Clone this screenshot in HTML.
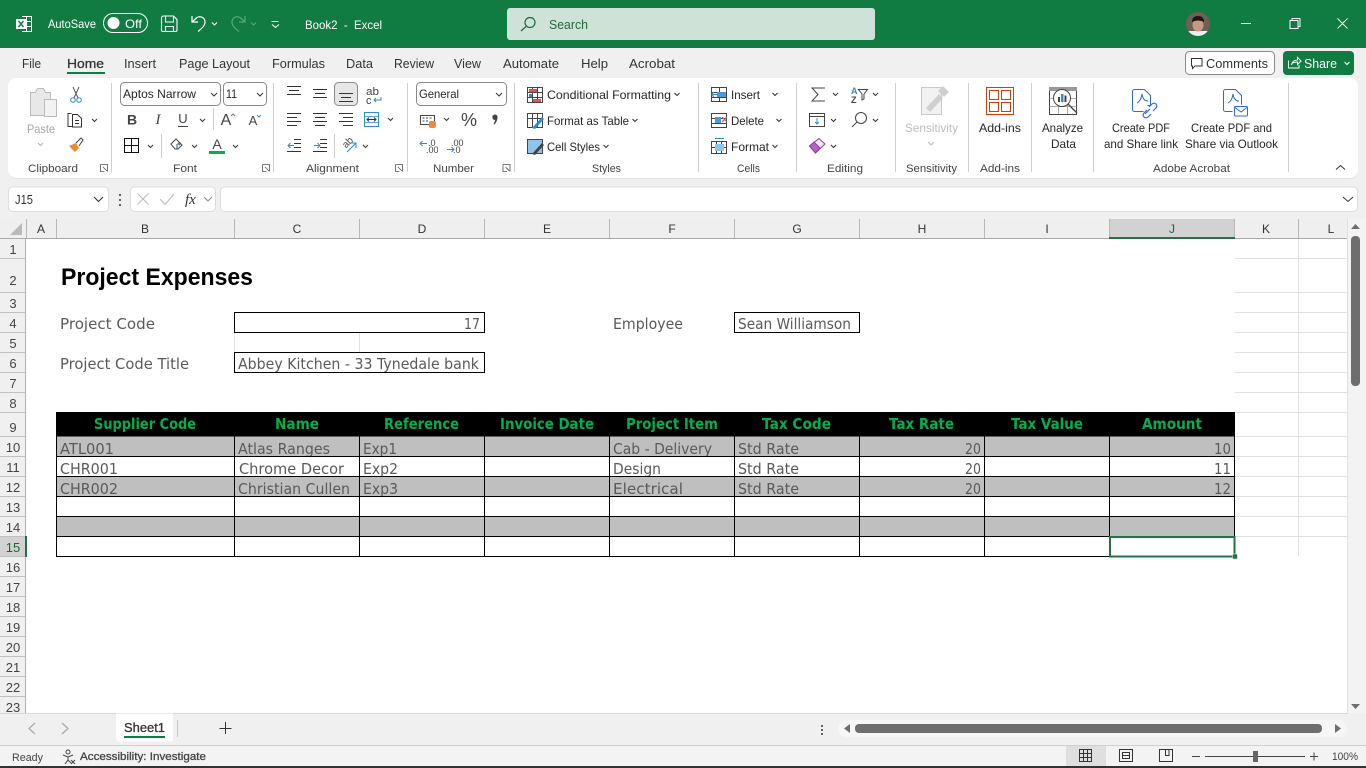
<!DOCTYPE html>
<html><head><meta charset="utf-8"><title>Book2 - Excel</title>
<style>
html,body{margin:0;padding:0;width:1366px;height:768px;overflow:hidden;background:#fff}
svg{display:block}
text{font-family:"Liberation Sans",sans-serif;font-size:12px;fill:#262626;white-space:pre}
.t{font-size:13px;fill:#333}
.g{font-size:11px;fill:#444}
.h{font-size:12px;fill:#333;text-anchor:middle}
.rn{font-size:13px;fill:#444;text-anchor:middle}
.s{font-family:"DejaVu Sans",sans-serif;font-size:15px;fill:#5a5a5a}
.b{font-family:"DejaVu Sans",sans-serif;font-weight:bold;font-size:15px;fill:#00b050}
.w{fill:#fff}
.sb{stroke:#333;stroke-width:.3}
</style></head><body>
<svg width="1366" height="768" viewBox="0 0 1366 768" xmlns="http://www.w3.org/2000/svg">
<rect width="1366" height="768" fill="#fff"/>
<!-- title bar -->
<rect width="1366" height="48" fill="#107c41"/>
<rect y="48" width="1366" height="172" fill="#f0f0f0"/>
<path d="M22 16.500h9.500v15H22M22 21.500h9.500M22 26.500h9.500M26.500 16.500v15" fill="none" stroke="#fff"/>
<rect x="16" y="19" width="10" height="10" fill="#fff"/>
<path d="M18.500 21l5 6M23.500 21l-5 6" stroke="#107c41" stroke-width="1.500"/>
<text x="48" y="28" class="w" textLength="48" lengthAdjust="spacingAndGlyphs">AutoSave</text>
<rect x="103.500" y="13.500" width="44" height="19" rx="9.500" fill="none" stroke="#fff"/>
<circle cx="113.500" cy="23" r="6" fill="#fff"/>
<text x="125" y="28" class="w" textLength="17" lengthAdjust="spacingAndGlyphs">Off</text>
<path d="M161.500 18a2 2 0 0 1 2-2h10l3.500 3.500V30a1.500 1.500 0 0 1-1.500 1.500h-12.500a1.500 1.500 0 0 1-1.500-1.500zM165.500 16v6h8v-6M165.500 31.500v-5h8v5" fill="none" stroke="#fff" stroke-width="1.100"/>
<path d="M192 16v6h6M192 22l5-4.500c4-2 8 .5 8 4.500 0 4-4 7-7 9.500" fill="none" stroke="#fff" stroke-width="1.200"/>
<path d="M245 16v6h-6M245 22l-5-4.500c-4-2-8 .5-8 4.500 0 4 4 7 7 9.500" fill="none" stroke="#5da57f" stroke-width="1.200"/>
<path d="M212 22.500l2.500 2.500 2.500-2.500M271.500 21.500h7M272 24.500l3.500 3 3.500-3" fill="none" stroke="#fff"/>
<path d="M251 22.500l2.500 2.500 2.500-2.500" fill="none" stroke="#5da57f"/>
<text x="305" y="29" class="w" textLength="77" lengthAdjust="spacingAndGlyphs">Book2  -  Excel</text>
<rect x="507" y="8" width="368" height="32" rx="3" fill="#cfe2d8"/>
<circle cx="530" cy="22.500" r="5" fill="none" stroke="#1c6b40" stroke-width="1.200"/><path d="M526 26.500l-5 4.500" stroke="#1c6b40" stroke-width="1.200"/>
<text x="549" y="29" style="fill:#24693f;font-size:13px" textLength="39" lengthAdjust="spacingAndGlyphs">Search</text>
<clipPath id="av"><circle cx="1198" cy="24" r="12"/></clipPath>
<g clip-path="url(#av)"><rect x="1186" y="12" width="24" height="24" fill="#6f5f56"/><rect x="1186" y="31" width="24" height="5" fill="#eee"/><ellipse cx="1198" cy="25" rx="5.500" ry="6.500" fill="#c79a80"/><path d="M1192 22q0-6 6-6t6 6q-6-3-12 0z" fill="#1e1612"/></g>
<path d="M1241 23.500h10M1290 20.500h8v8h-8zM1292 20.500v-2h8v8h-2M1337.500 18.500l10 10M1347.500 18.500l-10 10" fill="none" stroke="#fff"/>
<!-- tabs -->
<text x="22" y="68" class="t" textLength="19" lengthAdjust="spacingAndGlyphs">File</text>
<text x="67" y="68" class="t sb" textLength="37" lengthAdjust="spacingAndGlyphs">Home</text>
<rect x="67" y="72" width="38" height="2" fill="#107c41"/>
<text x="124" y="68" class="t" textLength="32" lengthAdjust="spacingAndGlyphs">Insert</text>
<text x="179" y="68" class="t" textLength="71" lengthAdjust="spacingAndGlyphs">Page Layout</text>
<text x="272" y="68" class="t" textLength="53" lengthAdjust="spacingAndGlyphs">Formulas</text>
<text x="346" y="68" class="t" textLength="27" lengthAdjust="spacingAndGlyphs">Data</text>
<text x="394" y="68" class="t" textLength="40" lengthAdjust="spacingAndGlyphs">Review</text>
<text x="454" y="68" class="t" textLength="27" lengthAdjust="spacingAndGlyphs">View</text>
<text x="503" y="68" class="t" textLength="56" lengthAdjust="spacingAndGlyphs">Automate</text>
<text x="581" y="68" class="t" textLength="27" lengthAdjust="spacingAndGlyphs">Help</text>
<text x="629" y="68" class="t" textLength="46" lengthAdjust="spacingAndGlyphs">Acrobat</text>
<rect x="1185.500" y="51.500" width="89" height="23" rx="4" fill="#fff" stroke="#8a8a8a"/>
<path d="M1191.500 58.500h10.500v7.500h-7l-2.500 2.500v-2.500h-1z" fill="none" stroke="#333"/>
<text x="1206" y="68" class="t" textLength="62" lengthAdjust="spacingAndGlyphs">Comments</text>
<rect x="1283" y="51" width="71" height="24" rx="4" fill="#107c41"/>
<path d="M1288.500 60.500v7.500h10.500v-3M1291.500 65q1-5 6-5v-2.500l3.500 3.500-3.500 3.500v-2.500q-3 0-6 1.500M1344.500 62l2.500 2.500 2.500-2.500" fill="none" stroke="#fff"/>
<text x="1304" y="68" class="t" style="fill:#fff" textLength="33" lengthAdjust="spacingAndGlyphs">Share</text>
<!-- ribbon -->
<rect x="8" y="79.500" width="1350" height="99" rx="8" fill="#d4d4d4"/>
<rect x="8" y="78" width="1350" height="100" rx="8" fill="#fff"/>
<path d="M111.500 83v89M273.500 83v89M407.500 83v89M514.500 83v89M698.500 83v89M796.500 83v89M895.500 83v89M968.500 83v89M1031.500 83v89M1093.500 83v89M1288.500 83v89" stroke="#cfcfcf"/>
<text x="28" y="172" class="g" textLength="50" lengthAdjust="spacingAndGlyphs">Clipboard</text>
<text x="173" y="172" class="g" textLength="24" lengthAdjust="spacingAndGlyphs">Font</text>
<text x="306" y="172" class="g" textLength="53" lengthAdjust="spacingAndGlyphs">Alignment</text>
<text x="433" y="172" class="g" textLength="41" lengthAdjust="spacingAndGlyphs">Number</text>
<text x="592" y="172" class="g" textLength="29" lengthAdjust="spacingAndGlyphs">Styles</text>
<text x="737" y="172" class="g" textLength="23" lengthAdjust="spacingAndGlyphs">Cells</text>
<text x="827" y="172" class="g" textLength="36" lengthAdjust="spacingAndGlyphs">Editing</text>
<text x="906" y="172" class="g" textLength="51" lengthAdjust="spacingAndGlyphs">Sensitivity</text>
<text x="980" y="172" class="g" textLength="40" lengthAdjust="spacingAndGlyphs">Add-ins</text>
<text x="1153" y="172" class="g" textLength="77" lengthAdjust="spacingAndGlyphs">Adobe Acrobat</text>
<path d="M100.500 164.500h7v7M100.500 164.500v7h4M103 167l4 4M262.500 164.500h7v7M262.500 164.500v7h4M265 167l4 4M395.500 164.500h7v7M395.500 164.500v7h4M398 167l4 4M503 164.500h7v7M503 164.500v7h4M505.500 167l4 4" fill="none" stroke="#555" stroke-width=".8"/>
<path d="M1336 169.500l4.500-4 4.500 4" fill="none" stroke="#333"/>
<!-- clipboard -->
<path d="M30.500 92.500h5l2-4h6l2 4h5v23h-20z" fill="#e8e8e8" stroke="#bbb"/>
<rect x="44.500" y="99.500" width="12" height="17" fill="#f2f2f2" stroke="#bbb"/>
<text x="27" y="133" style="fill:#a6a6a6" textLength="28" lengthAdjust="spacingAndGlyphs">Paste</text>
<path d="M38 143l2.500 2.500 2.500-2.500" fill="none" stroke="#b0b0b0"/>
<path d="M73 87l5 11M79 87l-5 11" stroke="#555" fill="none"/>
<circle cx="73" cy="100" r="2.300" fill="none" stroke="#2e8bd6"/><circle cx="79" cy="100" r="2.300" fill="none" stroke="#2e8bd6"/>
<path d="M71.500 113.500h-3.500v13h4M72.500 114.500h5l4 4v8.500h-9zM75 120.500h4M75 123.500h4" fill="none" stroke="#333"/>
<path d="M92 119l2.500 2.500 2.500-2.500" fill="none" stroke="#333"/>
<path d="M69 146l7-3 3 5-4 4z" fill="#ed8a35"/><path d="M76 143l5-5 2 2-4 6" fill="none" stroke="#444"/>
<!-- font -->
<rect x="120.500" y="82.500" width="100" height="23" rx="4" fill="#fff" stroke="#8a8a8a"/>
<rect x="223.500" y="82.500" width="43" height="23" rx="4" fill="#fff" stroke="#8a8a8a"/>
<text x="123" y="98" textLength="73" lengthAdjust="spacingAndGlyphs">Aptos Narrow</text>
<text x="226" y="98" textLength="11" lengthAdjust="spacingAndGlyphs">11</text>
<text x="132" y="124.500" text-anchor="middle" style="font-weight:bold;font-size:14px;fill:#444">B</text>
<text x="158" y="124" text-anchor="middle" style="font-family:'Liberation Serif';font-style:italic;font-size:15px;fill:#444">I</text>
<text x="183" y="123" text-anchor="middle" style="font-size:13px;fill:#444">U</text><path d="M178 126.500h10" stroke="#444"/>
<path d="M213.500 108v22M161.500 134v24" stroke="#ccc"/>
<text x="226" y="125" text-anchor="middle" style="font-size:16px;fill:#444">A</text>
<text x="253" y="125" text-anchor="middle" style="font-size:13px;fill:#444">A</text>
<path d="M231 116l2-2 2 2" fill="none" stroke="#2e8bd6"/><path d="M257 115l2 2 2-2" fill="none" stroke="#2e8bd6"/>
<path d="M124.500 138.500h14v14h-14zM124.500 145.500h14M131.500 138.500v14" fill="none" stroke="#111"/>
<path d="M171 144l5-5 6 6-4 4h-3zM177 144v5" fill="none" stroke="#444"/><path d="M178 143l2 2" stroke="#2e8bd6" stroke-width="2"/>
<text x="217" y="149" text-anchor="middle" style="font-size:14px;fill:#444">A</text>
<rect x="209" y="151" width="16" height="3" fill="#00b050"/>
<path d="M200 119l2.500 2.500 2.500-2.500M148 145l2.500 2.500 2.500-2.500M192 145l2.500 2.500 2.500-2.500M233 145l2.500 2.500 2.500-2.500" fill="none" stroke="#333"/>
<path d="M211 93l3 3 3-3M257 93l3 3 3-3" fill="none" stroke="#333"/>
<!-- alignment -->
<rect x="334.500" y="82.500" width="23" height="23" rx="4" fill="#e6e6e6" stroke="#8a8a8a"/>
<path d="M287 86.500h14M289 90.500h10M287 94.500h14M313 89.500h14M315 93.500h10M313 97.500h14M339 93.500h14M341 97.500h10M339 101.500h14
M287 113.500h14M287 117.500h10M287 121.500h14M287 125.500h10
M313 113.500h14M315 117.500h10M313 121.500h14M315 125.500h10
M339 113.500h14M343 117.500h10M339 121.500h14M343 125.500h10
M294 139.500h7M294 143.500h7M294 147.500h7M287 151.500h14M320 139.500h7M320 143.500h7M320 147.500h7M313 151.500h14" stroke="#333" fill="none"/>
<text x="366" y="95" style="font-size:11px;fill:#444" textLength="13" lengthAdjust="spacingAndGlyphs">ab</text>
<text x="366" y="104" style="font-size:11px;fill:#444">c</text>
<path d="M381 97v3h-7M376 98l-2 2 2 2" fill="none" stroke="#2e8bd6"/>
<rect x="364.500" y="112.500" width="14" height="14" fill="none" stroke="#2e8bd6"/><path d="M364.500 116.500h14M364.500 122.500h14" stroke="#2e8bd6" stroke-width=".7"/><path d="M367 119.500h9M369 117.500l-2 2 2 2M374 117.500l2 2-2 2" fill="none" stroke="#333"/>
<path d="M388 118l2.500 2.500 2.500-2.500M363 145l2.500 2.500 2.500-2.500" fill="none" stroke="#333"/>
<path d="M334.500 134v24" stroke="#ccc"/>
<path d="M294 145.500h-6M290.500 143l-2.500 2.500 2.500 2.500M314 145.500h6M317.500 143l2.500 2.500-2.500 2.500" fill="none" stroke="#2e8bd6"/>
<text x="342" y="147" transform="rotate(-45 346 143)" style="font-size:10px;fill:#444">ab</text>
<path d="M347 152l9-9M351 143h5v5" fill="none" stroke="#2e8bd6"/>
<!-- number -->
<rect x="416.500" y="82.500" width="90" height="23" rx="4" fill="#fff" stroke="#8a8a8a"/>
<text x="419" y="98" textLength="40" lengthAdjust="spacingAndGlyphs">General</text>
<path d="M496 93l3 3 3-3" fill="none" stroke="#333"/>
<rect x="420.500" y="115.500" width="14" height="9" fill="#fff" stroke="#444"/><path d="M422.500 118h2M426 118h2M429.500 118h2M422.500 121h2M426 121h2" stroke="#444"/><rect x="429" y="121" width="7" height="7" rx="2" fill="#ed8a35"/>
<path d="M444 118l2.500 2.500 2.500-2.500" fill="none" stroke="#333"/>
<text x="469" y="126" text-anchor="middle" style="font-size:18px;fill:#444">%</text>
<path d="M493 115.500a2.500 2.500 0 0 1 4.500 1.500c0 3-1 5-3 7.500l-1-.5c1-1.500 1.500-3 1.500-4-1.500 0-3-1-2.500-4.500z" fill="#444"/>
<text x="428" y="146" style="font-size:9px;fill:#444">.0</text><text x="426" y="153" style="font-size:9px;fill:#444">.00</text>
<text x="451" y="146" style="font-size:9px;fill:#444">.00</text><text x="453" y="153" style="font-size:9px;fill:#444">.0</text>
<path d="M420 143.500h7M422.500 141l-2.500 2.500 2.500 2.500M447 149.500h7M451.500 147l2.500 2.500-2.500 2.500" fill="none" stroke="#2e8bd6"/>
<!-- styles -->
<path d="M527.500 87.500h15v15h-15zM527.500 92.500h15M527.500 97.500h15M532.500 87.500v15M537.500 87.500v15" fill="none" stroke="#444"/>
<rect x="529" y="89" width="8" height="3" fill="#e84d4d"/><rect x="529" y="94" width="3" height="3" fill="#2e8bd6"/><rect x="533" y="99" width="8" height="3" fill="#e84d4d"/>
<text x="547" y="99" textLength="124" lengthAdjust="spacingAndGlyphs">Conditional Formatting</text>
<path d="M527.500 113.500h15v14h-15zM527.500 118.500h15M532.500 113.500v14M537.500 113.500v14" fill="none" stroke="#444"/><path d="M532 128l10-11 2 2-9 10z" fill="#2e8bd6"/>
<text x="547" y="125" textLength="82" lengthAdjust="spacingAndGlyphs">Format as Table</text>
<rect x="527.500" y="139.500" width="15" height="14" fill="#8ec3ec" stroke="#444"/><path d="M532 154l10-11 2 2-9 10z" fill="#444"/>
<text x="547" y="151" textLength="53" lengthAdjust="spacingAndGlyphs">Cell Styles</text>
<path d="M674.500 93l2.500 2.500 2.500-2.500M632.500 119l2.500 2.500 2.500-2.500M603.500 145l2.500 2.500 2.500-2.500M772.500 93l2.500 2.500 2.500-2.500M776.500 119l2.500 2.500 2.500-2.500M772.500 145l2.500 2.500 2.500-2.500M833 93l2.500 2.500 2.500-2.500M873 93l2.500 2.500 2.500-2.500M831 119l2.500 2.500 2.500-2.500M873 119l2.500 2.500 2.500-2.500M831 145l2.500 2.500 2.500-2.500" fill="none" stroke="#333"/>
<!-- cells -->
<path d="M711.500 87.500h15v14h-15zM711.500 92.500h15M711.500 97.500h15M719.500 87.500v14" fill="none" stroke="#444"/><rect x="717" y="92" width="9" height="5" fill="#4a9bdc"/><path d="M718 94.500h-6M714 92l-2.500 2.500 2.500 2.500" fill="none" stroke="#2e8bd6"/>
<text x="731" y="99" textLength="29" lengthAdjust="spacingAndGlyphs">Insert</text>
<path d="M711.500 113.500h15v14h-15zM711.500 118.500h15M711.500 123.500h15" fill="none" stroke="#444"/><rect x="715" y="117" width="6" height="6" fill="#4a9bdc"/><path d="M722 117l5 5M727 117l-5 5" stroke="#e84d4d" stroke-width="1.200"/>
<text x="731" y="125" textLength="33" lengthAdjust="spacingAndGlyphs">Delete</text>
<path d="M711.500 141.500h15v12h-15zM716.500 141.500v12M721.500 141.500v12M711.500 147.500h15" fill="none" stroke="#444"/><rect x="715" y="144" width="9" height="7" fill="#8ec3ec"/><path d="M715 138.500h9" stroke="#2e8bd6"/>
<text x="731" y="151" textLength="38" lengthAdjust="spacingAndGlyphs">Format</text>
<!-- editing -->
<path d="M825 88h-13l6 6.500-6 6.500h13" fill="none" stroke="#444"/>
<text x="851" y="94" style="font-size:9px;fill:#2e8bd6;font-weight:bold">A</text><text x="851" y="103" style="font-size:9px;fill:#444;font-weight:bold">Z</text>
<path d="M858.500 89.500h9l-3.500 4.500v5l-2 1v-6z" fill="none" stroke="#444"/>
<rect x="809.500" y="113.500" width="15" height="13" fill="none" stroke="#444"/><path d="M817 118v6M815 122l2 2 2-2" fill="none" stroke="#2e8bd6"/><path d="M809.500 116.500h15" stroke="#444"/>
<circle cx="861" cy="118" r="5.500" fill="none" stroke="#444"/><path d="M857 122l-5 5" stroke="#444"/>
<path d="M809.500 146L819 138.500 825 144 815.500 153z" fill="#f3e6f6" stroke="#8c3d9f"/><path d="M809.500 146L814 142 820 148 815.500 153z" fill="#b564c6" stroke="#8c3d9f"/>
<!-- sensitivity -->
<rect x="921.500" y="87.500" width="20" height="27" fill="#f2f2f2" stroke="#c9c9c9"/>
<path d="M926 108l13-14 4 4-13 14z" fill="#cfcfcf"/><path d="M938 91l5-5 6 6-5 5z" fill="#cfcfcf"/>
<text x="905" y="132" style="fill:#bdbdbd" textLength="53" lengthAdjust="spacingAndGlyphs">Sensitivity</text>
<path d="M928 142l3 3 3-3" fill="none" stroke="#bdbdbd"/>
<!-- addins -->
<rect x="986.500" y="87.500" width="27" height="27" fill="#fff" stroke="#d83b01"/>
<path d="M989.500 90.500h9v9h-9zM1001.500 90.500h9v9h-9zM989.500 102.500h9v9h-9zM1001.500 102.500h9v9h-9z" fill="none" stroke="#d83b01"/>
<text x="979" y="132" textLength="42" lengthAdjust="spacingAndGlyphs">Add-ins</text>
<!-- analyze -->
<rect x="1049.500" y="87.500" width="27" height="27" fill="#fff" stroke="#444"/><rect x="1049" y="87" width="28" height="4" fill="#999"/>
<path d="M1049.500 98.500h27M1049.500 106.500h27M1058.500 91v23M1067.500 91v23" stroke="#aaa"/>
<circle cx="1062" cy="98" r="8.500" fill="#fff" stroke="#444"/><path d="M1068 104l9 9" stroke="#444" stroke-width="1.300"/>
<rect x="1058" y="97" width="2" height="5" fill="#444"/><rect x="1061" y="94" width="2.500" height="8" fill="#2e8bd6"/><rect x="1064.500" y="95.500" width="2" height="6.500" fill="#444"/>
<text x="1042" y="132" textLength="41" lengthAdjust="spacingAndGlyphs">Analyze</text>
<text x="1051" y="148" textLength="25" lengthAdjust="spacingAndGlyphs">Data</text>
<!-- acrobat -->
<path d="M1134.500 89.500h10l6 6v10h-3M1134.500 89.500a2 2 0 0 0-2 2v18a2 2 0 0 0 2 2h9" fill="none" stroke="#2e6bd6"/>
<path d="M1137 103q4-2 5-9 1 7 6 7" fill="none" stroke="#2e6bd6"/>
<path d="M1145 114l5-5M1149 107l3-3a2.500 2.500 0 0 1 4 4l-3 3M1147 110l-3 3a2.500 2.500 0 0 0 4 4l3-3" fill="none" stroke="#2e6bd6" stroke-width="1.200"/>
<path d="M1225.500 89.500h10l6 6v9M1225.500 89.500a2 2 0 0 0-2 2v18a2 2 0 0 0 2 2h7" fill="none" stroke="#2e6bd6"/>
<path d="M1228 103q4-2 5-9 1 7 6 7" fill="none" stroke="#2e6bd6"/>
<rect x="1234.500" y="106.500" width="13" height="9.500" rx="1" fill="#fff" stroke="#2e6bd6"/><path d="M1235 107.500l6 4.500 6-4.500" fill="none" stroke="#2e6bd6"/>
<text x="1112" y="132" textLength="58" lengthAdjust="spacingAndGlyphs">Create PDF</text>
<text x="1104" y="148" textLength="74" lengthAdjust="spacingAndGlyphs">and Share link</text>
<text x="1191" y="132" textLength="81" lengthAdjust="spacingAndGlyphs">Create PDF and</text>
<text x="1185" y="148" textLength="93" lengthAdjust="spacingAndGlyphs">Share via Outlook</text>
<!-- formula bar -->
<rect x="8.500" y="187" width="100" height="24.500" rx="4" fill="#fff" stroke="#ddd"/>
<text x="15" y="204" class="t" textLength="18" lengthAdjust="spacingAndGlyphs">J15</text>
<path d="M94 197l4.500 4.500 4.500-4.500" fill="none" stroke="#333" stroke-width="1.100"/>
<path d="M120 194v2M120 199v2M120 204v2" stroke="#333" stroke-width="1.500"/>
<rect x="130.500" y="187" width="85" height="24.500" rx="4" fill="#fff" stroke="#ddd"/>
<path d="M137.500 193.500l11 11M148.500 193.500l-11 11M160 199l5 5.500 9-10.500" fill="none" stroke="#bdbdbd" stroke-width="1.100"/>
<text x="185" y="204" style="font-family:'Liberation Serif';font-style:italic;font-size:15px;fill:#333">fx</text>
<path d="M204 197l4 4 4-4" fill="none" stroke="#888"/>
<rect x="220.500" y="187" width="1137" height="24.500" rx="4" fill="#fff" stroke="#ddd"/>
<path d="M1343 197l5 4.500 5-4.500" fill="none" stroke="#333"/>
<!-- column headers -->
<rect y="219" width="1348" height="19" fill="#efefef"/>
<rect x="1109" y="219" width="126" height="19" fill="#d2d2d2"/>
<path d="M22 223v12h-12z" fill="#b9b9b9"/>
<path d="M26.500 219v19M56.500 219v19M234.500 219v19M359.500 219v19M484.500 219v19M609.500 219v19M734.500 219v19M859.500 219v19M984.500 219v19M1109.500 219v19M1234.500 219v19M1298.500 219v19" stroke="#b8b8b8"/>
<rect y="238" width="1348" height="1" fill="#a9a9a9"/>
<rect x="1109" y="237" width="126" height="2" fill="#217346"/>
<text x="41" y="233" class="h">A</text><text x="145" y="233" class="h">B</text><text x="297" y="233" class="h">C</text><text x="422" y="233" class="h">D</text><text x="547" y="233" class="h">E</text><text x="672" y="233" class="h">F</text><text x="797" y="233" class="h">G</text><text x="922" y="233" class="h">H</text><text x="1047" y="233" class="h">I</text><text x="1172" y="233" class="h" style="fill:#0f6b3a">J</text><text x="1266" y="233" class="h">K</text><text x="1331" y="233" class="h">L</text>
<!-- row headers -->
<rect y="239" width="26" height="475" fill="#f0f0f0"/>
<rect y="536" width="26" height="20" fill="#d2d2d2"/>
<path d="M0 258.500h26M0 292.500h26M0 312.500h26M0 332.500h26M0 352.500h26M0 372.500h26M0 392.500h26M0 412.500h26M0 436.500h26M0 456.500h26M0 476.500h26M0 496.500h26M0 516.500h26M0 536.500h26M0 556.500h26M0 576.500h26M0 596.500h26M0 616.500h26M0 636.500h26M0 656.500h26M0 676.500h26M0 696.500h26" stroke="#c0c0c0"/>
<rect x="25" y="239" width="1" height="475" fill="#b0b0b0"/>
<rect x="25" y="536" width="2" height="21" fill="#217346"/>
<text x="13" y="254" class="rn">1</text><text x="13" y="285" class="rn">2</text><text x="13" y="308" class="rn">3</text><text x="13" y="328" class="rn">4</text><text x="13" y="348" class="rn">5</text><text x="13" y="368" class="rn">6</text><text x="13" y="388" class="rn">7</text><text x="13" y="408" class="rn">8</text><text x="13" y="432" class="rn">9</text><text x="13" y="452" class="rn">10</text><text x="13" y="472" class="rn">11</text><text x="13" y="492" class="rn">12</text><text x="13" y="512" class="rn">13</text><text x="13" y="532" class="rn">14</text><text x="13" y="552" class="rn" style="fill:#0f6b3a">15</text><text x="13" y="572" class="rn">16</text><text x="13" y="592" class="rn">17</text><text x="13" y="612" class="rn">18</text><text x="13" y="632" class="rn">19</text><text x="13" y="652" class="rn">20</text><text x="13" y="672" class="rn">21</text><text x="13" y="692" class="rn">22</text><text x="13" y="712" class="rn">23</text>
<!-- gridlines -->
<path d="M1235 258.500h112M1235 292.500h112M1235 312.500h112M1235 332.500h112M1235 352.500h112M1235 372.500h112M1235 392.500h112M1235 412.500h112M1235 436.500h112M1235 456.500h112M1235 476.500h112M1235 496.500h112M1235 516.500h112M1235 536.500h112M1298.500 239v317M234.500 333v19M359.500 333v19" stroke="#e0e0e0"/>
<!-- sheet content -->
<text x="61" y="285" style="font-weight:bold;font-size:24px;fill:#000" textLength="192" lengthAdjust="spacingAndGlyphs">Project Expenses</text>
<text x="60" y="329" class="s" textLength="95" lengthAdjust="spacingAndGlyphs">Project Code</text>
<text x="60" y="369" class="s" textLength="129" lengthAdjust="spacingAndGlyphs">Project Code Title</text>
<text x="613" y="329" class="s" textLength="70" lengthAdjust="spacingAndGlyphs">Employee</text>
<rect x="234.500" y="312.500" width="250" height="20" fill="#fff"/>
<text x="464" y="329" class="s" textLength="16" lengthAdjust="spacingAndGlyphs">17</text>
<rect x="234.500" y="352.500" width="250" height="20" fill="#fff"/>
<text x="238" y="369" class="s" textLength="241" lengthAdjust="spacingAndGlyphs">Abbey Kitchen - 33 Tynedale bank</text>
<text x="738" y="329" class="s" textLength="113" lengthAdjust="spacingAndGlyphs">Sean Williamson</text>
<rect x="235" y="372.500" width="250" height="4" fill="#fff"/>
<rect x="735" y="332.500" width="125" height="4" fill="#fff"/>
<path d="M234.500 312.500h250v20h-250zM234.500 352.500h250v20h-250zM734.500 312.500h125v20h-125z" fill="none" stroke="#000"/>
<!-- table -->
<rect x="56" y="412" width="1179" height="24.500" fill="#000"/>
<text x="94" y="429" class="b" textLength="102" lengthAdjust="spacingAndGlyphs">Supplier Code</text>
<text x="275" y="429" class="b" textLength="44" lengthAdjust="spacingAndGlyphs">Name</text>
<text x="384" y="429" class="b" textLength="75" lengthAdjust="spacingAndGlyphs">Reference</text>
<text x="500" y="429" class="b" textLength="94" lengthAdjust="spacingAndGlyphs">Invoice Date</text>
<text x="626" y="429" class="b" textLength="92" lengthAdjust="spacingAndGlyphs">Project Item</text>
<text x="762" y="429" class="b" textLength="69" lengthAdjust="spacingAndGlyphs">Tax Code</text>
<text x="889" y="429" class="b" textLength="65" lengthAdjust="spacingAndGlyphs">Tax Rate</text>
<text x="1011" y="429" class="b" textLength="72" lengthAdjust="spacingAndGlyphs">Tax Value</text>
<text x="1142" y="429" class="b" textLength="60" lengthAdjust="spacingAndGlyphs">Amount</text>
<rect x="56" y="436.500" width="1179" height="20" fill="#bfbfbf"/>
<text x="60" y="454" class="s" textLength="54" lengthAdjust="spacingAndGlyphs">ATL001</text>
<text x="238" y="454" class="s" textLength="92" lengthAdjust="spacingAndGlyphs">Atlas Ranges</text>
<text x="363" y="454" class="s" textLength="34" lengthAdjust="spacingAndGlyphs">Exp1</text>
<text x="613" y="454" class="s" textLength="99" lengthAdjust="spacingAndGlyphs">Cab - Delivery</text>
<text x="738" y="454" class="s" textLength="61" lengthAdjust="spacingAndGlyphs">Std Rate</text>
<text x="965" y="454" class="s" textLength="16" lengthAdjust="spacingAndGlyphs">20</text>
<text x="1214" y="454" class="s" textLength="17" lengthAdjust="spacingAndGlyphs">10</text>
<rect x="56" y="456.500" width="1179" height="20" fill="#fff"/>
<text x="60" y="474" class="s" textLength="58" lengthAdjust="spacingAndGlyphs">CHR001</text>
<text x="239" y="474" class="s" textLength="105" lengthAdjust="spacingAndGlyphs">Chrome Decor</text>
<text x="363" y="474" class="s" textLength="35" lengthAdjust="spacingAndGlyphs">Exp2</text>
<text x="613" y="474" class="s" textLength="48" lengthAdjust="spacingAndGlyphs">Design</text>
<text x="738" y="474" class="s" textLength="61" lengthAdjust="spacingAndGlyphs">Std Rate</text>
<text x="965" y="474" class="s" textLength="16" lengthAdjust="spacingAndGlyphs">20</text>
<text x="1214" y="474" class="s" textLength="17" lengthAdjust="spacingAndGlyphs">11</text>
<rect x="56" y="476.500" width="1179" height="20" fill="#bfbfbf"/>
<text x="60" y="494" class="s" textLength="58" lengthAdjust="spacingAndGlyphs">CHR002</text>
<text x="238" y="494" class="s" textLength="112" lengthAdjust="spacingAndGlyphs">Christian Cullen</text>
<text x="363" y="494" class="s" textLength="35" lengthAdjust="spacingAndGlyphs">Exp3</text>
<text x="613" y="494" class="s" textLength="70" lengthAdjust="spacingAndGlyphs">Electrical</text>
<text x="738" y="494" class="s" textLength="61" lengthAdjust="spacingAndGlyphs">Std Rate</text>
<text x="965" y="494" class="s" textLength="16" lengthAdjust="spacingAndGlyphs">20</text>
<text x="1214" y="494" class="s" textLength="17" lengthAdjust="spacingAndGlyphs">12</text>
<rect x="56" y="496.500" width="1179" height="20" fill="#fff"/>
<rect x="56" y="516.500" width="1179" height="20" fill="#bfbfbf"/>
<rect x="56" y="536.500" width="1179" height="20" fill="#fff"/>
<path d="M56.500 436v121M234.500 436v121M359.500 436v121M484.500 436v121M609.500 436v121M734.500 436v121M859.500 436v121M984.500 436v121M1109.500 436v121M1234.500 436v121M56 456.500h1179M56 476.500h1179M56 496.500h1179M56 516.500h1179M56 536.500h1179M56 556.500h1179" fill="none" stroke="#000"/>
<rect x="1110" y="537" width="124.500" height="19.500" fill="#fff" stroke="#217346" stroke-width="2"/>
<rect x="1232.500" y="554" width="5" height="5" fill="#217346" stroke="#fff" stroke-width=".5"/>
<!-- vertical scrollbar -->
<rect x="1348" y="219" width="18" height="495" fill="#f3f3f3"/>
<rect x="1347" y="219" width="1" height="495" fill="#e0e0e0"/>
<path d="M1351 229l4.500-5 4.500 5z" fill="#6e6e6e"/>
<rect x="1351" y="236" width="9" height="150" rx="4" fill="#6e6e6e"/>
<path d="M1351 704l4.500 5 4.500-5z" fill="#6e6e6e"/>
<!-- sheet tabs -->
<rect y="713" width="1366" height="33" fill="#f0f0f0"/>
<rect y="713" width="1348" height="1" fill="#d9d9d9"/>
<path d="M116 713.500h57v25a3 3 0 0 1-3 3h-51a3 3 0 0 1-3-3z" fill="#fff"/>
<text x="124" y="732" class="t sb" textLength="41" lengthAdjust="spacingAndGlyphs">Sheet1</text>
<rect x="124" y="736" width="41" height="2" fill="#107c41"/>
<path d="M177.500 720v17" stroke="#c8c8c8"/>
<path d="M35 723l-6 5.500 6 5.500M62 723l6 5.500-6 5.500" fill="none" stroke="#a8a8a8" stroke-width="1.200"/>
<path d="M225.500 722v12M219.500 728.500h12" stroke="#333"/>
<path d="M822 725v2M822 729v2M822 733v2" stroke="#333" stroke-width="1.500"/>
<rect x="838" y="720" width="509" height="17" rx="8" fill="#f6f6f6"/>
<path d="M850 724v9l-6-4.500z" fill="#6e6e6e"/>
<rect x="855" y="724" width="467" height="9" rx="4" fill="#6e6e6e"/>
<path d="M1335 724v9l6-4.500z" fill="#6e6e6e"/>
<!-- status bar -->
<rect y="745" width="1366" height="23" fill="#f3f3f3"/>
<rect y="745" width="1366" height="1" fill="#d0d0d0"/>
<rect y="766" width="1366" height="2" fill="#333"/>
<text x="12" y="761" class="g" textLength="31" lengthAdjust="spacingAndGlyphs">Ready</text>
<circle cx="68" cy="752" r="2" fill="none" stroke="#444"/><path d="M63 755l5 2 5-2M68 757v3l-3 4M68 760l3 3M71 760l4 4M75 760l-4 4" fill="none" stroke="#444"/>
<text x="80" y="760" class="g" style="stroke:#444;stroke-width:.3" textLength="126" lengthAdjust="spacingAndGlyphs">Accessibility: Investigate</text>
<rect x="1066" y="746" width="40" height="20" fill="#dfdfdf"/>
<path d="M1079.500 749.500h12v12h-12zM1079.500 753.500h12M1079.500 757.500h12M1083.500 749.500v12M1087.500 749.500v12M1119.500 749.500h13v12h-13zM1122.500 752.500h7v6h-7zM1122.500 755.500h7M1159.500 749.500h13v12h-13zM1165.500 749.500v6h3.500v-6" fill="none" stroke="#333"/>
<path d="M1192 756.500h8M1205 756.500h100M1310 756.500h8M1314 752.500v8" stroke="#444"/>
<rect x="1253" y="751" width="5" height="11" fill="#666"/>
<text x="1332" y="760" class="g" textLength="26" lengthAdjust="spacingAndGlyphs">100%</text>
</svg>
</body></html>
